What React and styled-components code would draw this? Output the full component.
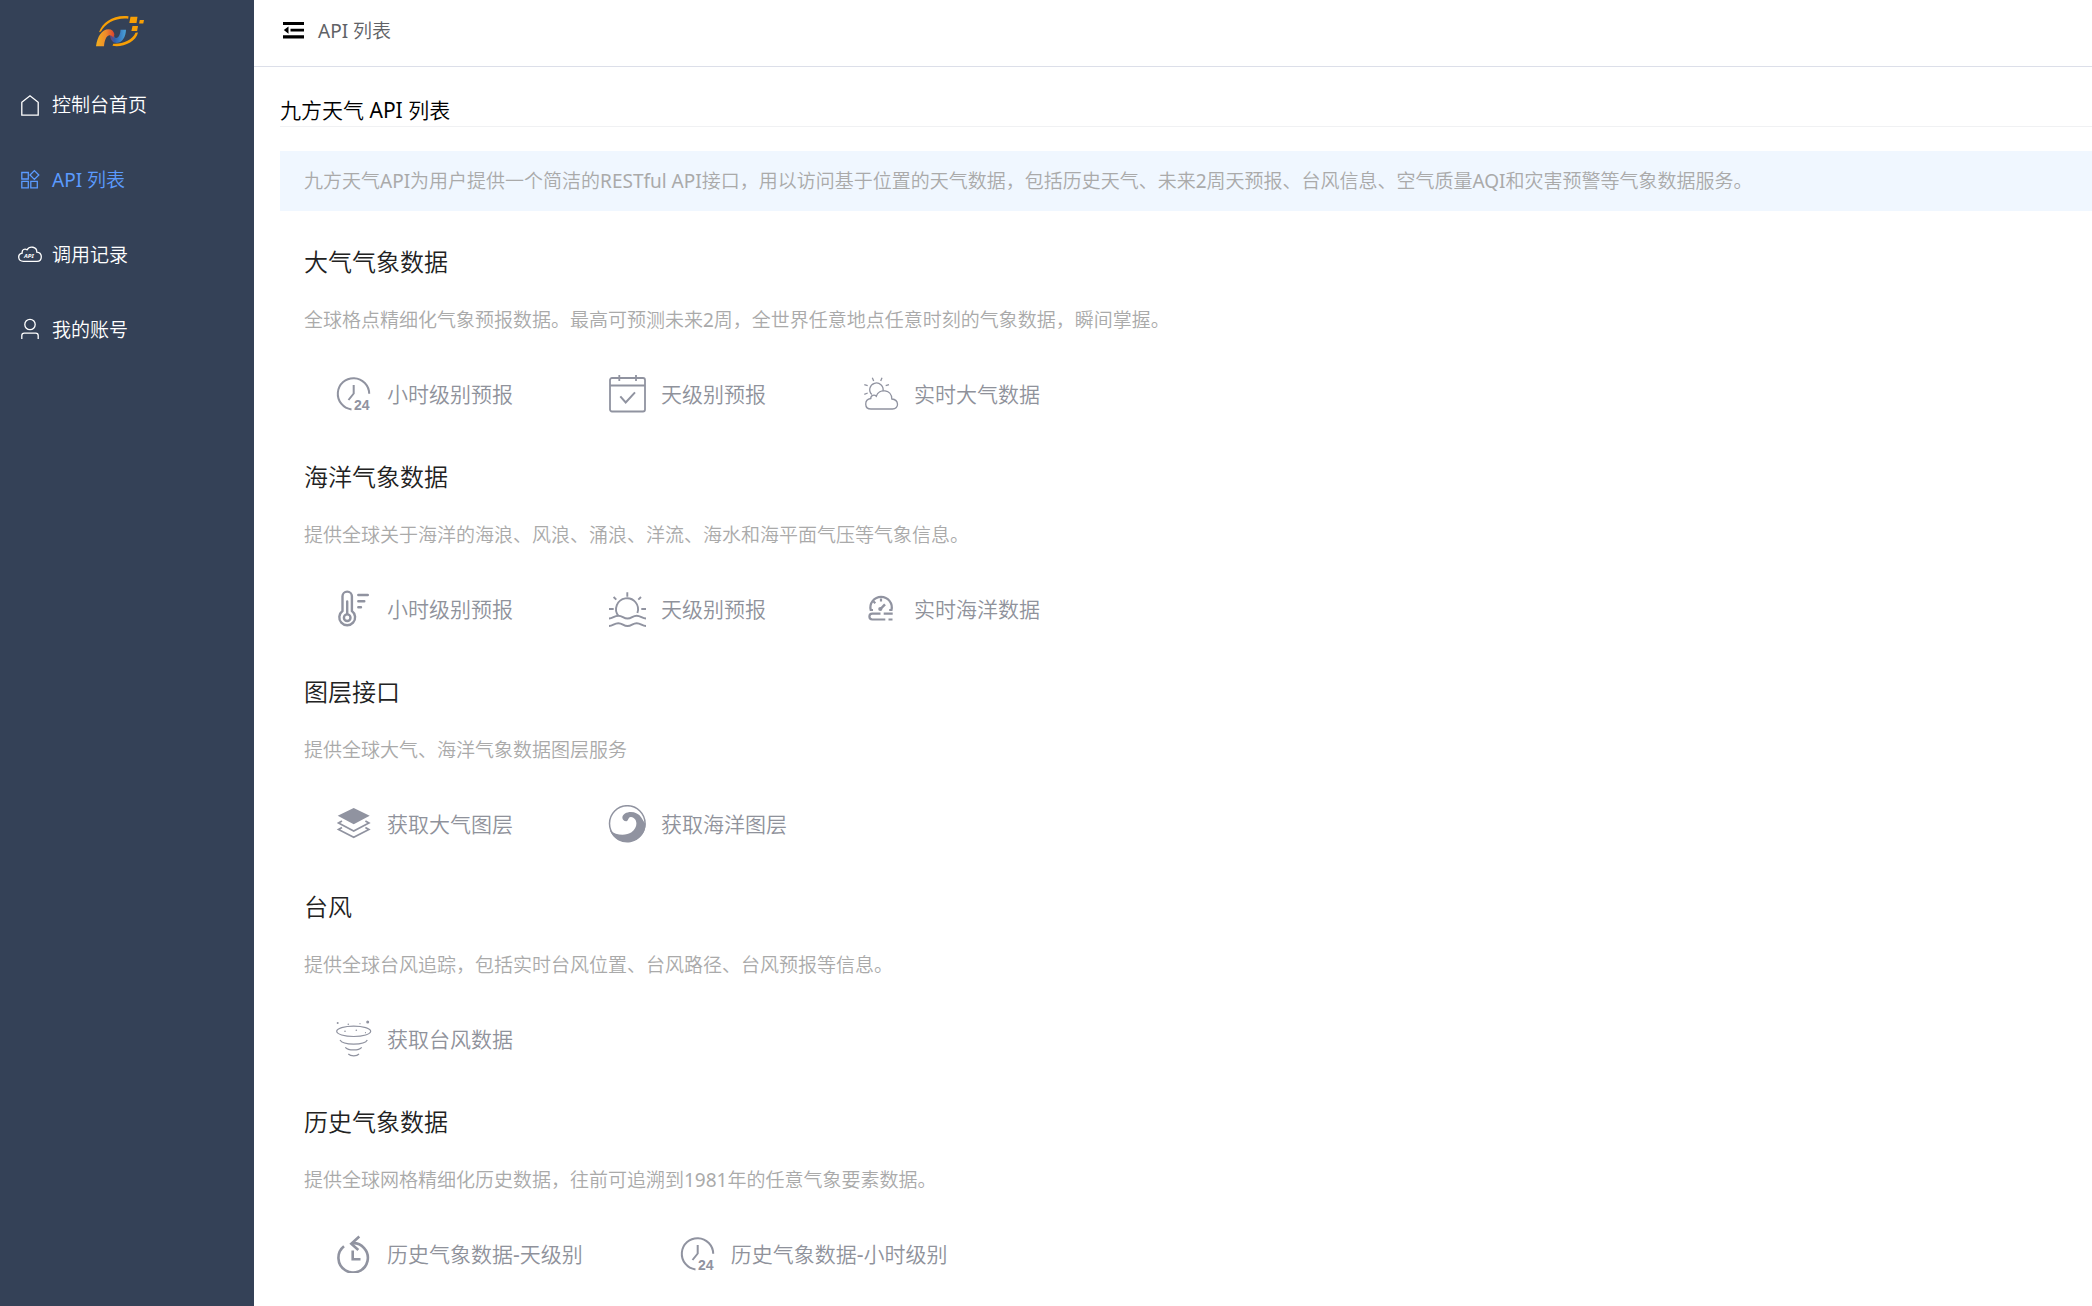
import React from "react";
import styled, { createGlobalStyle } from "styled-components";

const menu = [
  { id: "home", text: "控制台首页" },
  { id: "list", text: "API 列表", active: true },
  { id: "cloud", text: "调用记录" },
  { id: "user", text: "我的账号" },
];

const groups = [
  {
    title: "大气气象数据",
    desc: "全球格点精细化气象预报数据。最高可预测未来2周，全世界任意地点任意时刻的气象数据，瞬间掌握。",
    items: [
      { icon: "clock24", text: "小时级别预报" },
      { icon: "calendar", text: "天级别预报" },
      { icon: "cloudSun", text: "实时大气数据" },
    ],
  },
  {
    title: "海洋气象数据",
    desc: "提供全球关于海洋的海浪、风浪、涌浪、洋流、海水和海平面气压等气象信息。",
    items: [
      { icon: "thermometer", text: "小时级别预报" },
      { icon: "sunset", text: "天级别预报" },
      { icon: "gauge", text: "实时海洋数据" },
    ],
  },
  {
    title: "图层接口",
    desc: "提供全球大气、海洋气象数据图层服务",
    items: [
      { icon: "layers", text: "获取大气图层" },
      { icon: "wave", text: "获取海洋图层" },
    ],
  },
  {
    title: "台风",
    desc: "提供全球台风追踪，包括实时台风位置、台风路径、台风预报等信息。",
    items: [{ icon: "typhoon", text: "获取台风数据" }],
  },
  {
    title: "历史气象数据",
    desc: "提供全球网格精细化历史数据，往前可追溯到1981年的任意气象要素数据。",
    items: [
      { icon: "history", text: "历史气象数据-天级别" },
      { icon: "clock24", text: "历史气象数据-小时级别" },
    ],
  },
];

const menuIcons = {
  home: <path d="M3.8 10.2 12 3.8l8.2 6.4v13H3.8z" />,
  list: (
    <path d="M3.8 5.5h6.5V12H3.8zM3.8 14.3h6.5v6.5H3.8zM12.8 14.3h6.5v6.5h-6.5zM16.4 3.6l4.4 4.4-4.4 4.4L12 8z" />
  ),
  cloud: (
    <>
      <path d="M5.5 19.3c-6 0-6.3-7.3-1.3-8.1-.6-3.8 2.8-4.9 4.8-3.4 2.6-4.4 10-3.2 9.8 2.4 6.2.6 5.7 9.1.2 9.1z" />
      <text x="6" y="16" fontSize="6" fontWeight="700" fontStyle="italic">
        API
      </text>
    </>
  ),
  user: (
    <>
      <circle cx="12" cy="7.5" r="5.2" />
      <path d="M3.8 22v-3.5c0-1.5 1-2.3 2.5-2.3h11.4c1.5 0 2.5.8 2.5 2.3V22" />
    </>
  ),
};

const apiIcons = {
  clock24: (
    <g strokeWidth="2">
      <path d="M35.2 18.8A15.7 15.7 0 1 0 17.5 34.4" />
      <path d="M19.7 10v8.5L14.5 25" />
      <text x="20" y="34.5" fontSize="14" fontWeight="700">
        24
      </text>
    </g>
  ),
  calendar: (
    <g strokeWidth="1.8">
      <rect x="2" y="3" width="35" height="33.5" rx="2" />
      <path d="M2 10.5h35M11.3 0v6M28 0v6" />
      <path d="M12.3 21.3l5.4 6.2L27 17.3" strokeWidth="2" />
    </g>
  ),
  cloudSun: (
    <g strokeWidth="1.3">
      <path d="M10.8 19.5A6.7 6.7 0 1 1 22 16" />
      <path d="M11.3 2.7l1.4 3.3M21 2.7L19.7 6M3.3 9.7l3.4 1M3.3 19.3L6.7 18M24.7 10.7l3.3-1" />
      <path d="M10 34c-7 0-7-9.5-.2-10.5-.3-3.5 3.7-4.3 5.5-2.3 2.5-8 15.5-7.2 15.5 2.8 7.5.8 7.5 10 .7 10z" />
    </g>
  ),
  thermometer: (
    <g strokeWidth="2.4" strokeLinecap="round">
      <path d="M8.5 21V6.3a4.7 4.7 0 0 1 9.4 0V21a7.9 7.9 0 1 1-9.4 0z" />
      <path d="M13.2 11.5v12.3M24.3 5h9.5M24.3 11.3h6M24.3 17.3h2.7" />
      <circle cx="13.2" cy="27.7" r="3.3" />
    </g>
  ),
  sunset: (
    <g strokeWidth="1.9">
      <path d="M10.4 26a11 11 0 1 1 19-3" />
      <path d="M19.3 2.3v4.4M30.3 9.7L33 7M8.3 9.7L5.6 7M1 19h4.7M33.3 19H38" />
      <path d="M1 28.5c4 0 5-2.8 9.3-2.8s5 2.8 9.2 2.8 5-2.8 9.2-2.8 5.3 2.8 9.3 2.8" />
      <path d="M1 36c4 0 5-2.8 9.3-2.8s5 2.8 9.2 2.8 5-2.8 9.2-2.8S34 36 38 36" />
    </g>
  ),
  gauge: (
    <g strokeWidth="2.2">
      <path d="M12 20H9.7a10.7 10.7 0 1 1 20.8 0h-2.3" />
      <path d="M20 8.5v3M12.3 11.3l2 2" />
      <path d="M19.5 19l4.5-4.7" strokeWidth="2.5" />
      <circle cx="19.3" cy="19" r="1" />
      <path d="M19.5 23.7h-8.2a2.9 2.9 0 0 0 0 5.8h13M22.7 23.7h9M27.5 29.5h4" />
    </g>
  ),
  layers: (
    <g strokeWidth="1.7">
      <path className="solid" d="M19.7 3l16 7.8-16 8.5-16-8.5z" />
      <path d="M8 16l-3.5 2 15.2 8 15.2-8-3.5-2" />
      <path d="M8 22.5l-3.5 2 15.2 7.8 15.2-7.8-3.5-2" />
    </g>
  ),
  wave: (
    <g strokeWidth="1.5">
      <circle cx="19.3" cy="18.5" r="17.8" />
      <path
        className="solid"
        d="M2 25.5c6 5 16 5.5 21.5 1.8 7-5 6.2-14.5-.5-15.3-3-.2-2 3.5-4.7 4.3C14 16.3 12.7 11 17 8.5c5-3 13-1.5 16.3 4 1.8 3 3 5 4.2 6.5A18.3 18.3 0 0 1 2 25.5z"
      />
    </g>
  ),
  typhoon: (
    <g strokeWidth="1.2">
      <ellipse cx="19.7" cy="11.3" rx="17" ry="5.2" />
      <path d="M6 20c3 5.5 24.5 5.5 27.3 0M11.3 27.3c3 3.5 13.5 3.5 16.4 0M14.3 34c2.5 2.4 8.5 2.4 10.7 0" />
      <g className="solid">
        <circle cx="3.7" cy="3" r="1" />
        <circle cx="33.7" cy="2" r="1.5" />
        <circle cx="14.3" cy="4.3" r=".8" />
        <circle cx="26" cy="3.7" r=".6" />
        <circle cx="11" cy="11.3" r=".8" />
        <circle cx="22.3" cy="10.3" r=".8" />
        <circle cx="31.5" cy="12.7" r=".6" />
      </g>
    </g>
  ),
  history: (
    <g strokeWidth="2.6">
      <path d="M10 11.3a14.7 14.7 0 1 0 7.5-3.1" />
      <path d="M25.3 1.5l-8 7.2 7 6.3M18.7 15.5v8.8h7.8" />
    </g>
  ),
};

const App = () => {
  return (
    <>
      <GlobalStyle />
      <Layout>
        <Sidebar>
          <LogoLink href="#home" aria-label="九方天气">
            <Logo />
          </LogoLink>
          <nav>
            {menu.map(({ id, text, active }) => (
              <MenuLink
                key={id}
                href={`#${id}`}
                $active={active}
                aria-current={active ? "page" : undefined}
              >
                <MenuIcon viewBox="0 0 24 24" aria-hidden="true">
                  {menuIcons[id]}
                </MenuIcon>
                {text}
              </MenuLink>
            ))}
          </nav>
        </Sidebar>
        <Main>
          <TopBar>
            <FoldButton type="button" aria-label="收起菜单">
              <svg width="21" height="20" viewBox="0 0 21 20">
                <path d="M0 2h21v3H0zM7.5 8.8H21v2.6H7.5zM0 15.3h21v3.2H0zM.8 10.1l4.7-3.6v7.2z" />
              </svg>
            </FoldButton>
            <span>API 列表</span>
          </TopBar>
          <Content>
            <PageTitle>九方天气 API 列表</PageTitle>
            <Notice>
              九方天气API为用户提供一个简洁的RESTful
              API接口，用以访问基于位置的天气数据，包括历史天气、未来2周天预报、台风信息、空气质量AQI和灾害预警等气象数据服务。
            </Notice>
            {groups.map((group) => (
              <Group key={group.title}>
                <h2>{group.title}</h2>
                <p>{group.desc}</p>
                <ApiList>
                  {group.items.map(({ icon, text }) => (
                    <li key={text}>
                      <ApiLink href="#doc">
                        <ApiIcon viewBox="0 0 38 38" aria-hidden="true">
                          {apiIcons[icon]}
                        </ApiIcon>
                        {text}
                      </ApiLink>
                    </li>
                  ))}
                </ApiList>
              </Group>
            ))}
          </Content>
        </Main>
      </Layout>
    </>
  );
};

const Logo = () => (
  <svg width="48" height="32" viewBox="0 0 48 32" aria-hidden="true">
    <defs>
      <linearGradient id="leg" x1="0" y1="0" x2="1" y2="0">
        <stop offset="0" stopColor="#f2b01e" />
        <stop offset=".55" stopColor="#ee8a2b" />
        <stop offset="1" stopColor="#d9402f" />
      </linearGradient>
      <linearGradient id="hook" x1="0" y1="0" x2="1" y2="0">
        <stop offset="0" stopColor="#7a3f6a" />
        <stop offset=".3" stopColor="#2c5fb0" />
        <stop offset="1" stopColor="#4aa3d8" />
      </linearGradient>
    </defs>
    <g fill="#f79f05">
      <path d="M3 17.3C6.5 7 18-.5 32.5 1.3l-.3 2.4C20 2.500 9.500 8 5 16.500z" />
      <path d="M16.5 30.8c10 1.8 23.5-3.5 25.5-13.3l-2.5.3C36.5 25 27 29.3 17.3 28.8z" />
      <path d="M34.5 1.8h7l-1 6.3h-7.2zM43.8 5h4.2l-.7 3.4h-4.2zM36.5 11h5.5l-.9 5h-5.7z" />
    </g>
    <path
      fill="url(#hook)"
      d="M14 20c.5 5 3 8.3 7 8 5.5-.5 8.7-6 9-13.2h-5.5c-.2 4.5-1.8 8.2-4.3 8.3-1.5 0-2-1.8-2.2-3.5z"
    />
    <path
      fill="url(#leg)"
      d="M0 31.2C1.5 21 6 14.3 12.5 14.3c3.3 0 5.3 2 5.9 4.9l-1 3.5c-1-1.6-2.2-2.9-4.1-2.5-3.3.7-4.7 5.3-5.3 11z"
    />
  </svg>
);

const GlobalStyle = createGlobalStyle`
  * {
    box-sizing: border-box;
    margin: 0;
    padding: 0;
  }
  body {
    background: #fff;
    font-family: "Noto Sans", "Noto Sans CJK SC DemiLight", "Noto Sans CJK SC", sans-serif;
    font-size: 19px;
  }
  a {
    text-decoration: none;
  }
`;

const Layout = styled.div`
  display: flex;
  min-height: 100vh;
`;

const Sidebar = styled.aside`
  flex: 0 0 254px;
  background: #344157;
`;

const LogoLink = styled.a`
  display: flex;
  height: 66px;
  padding: 15px 0 0 96px;
`;

const MenuLink = styled.a`
  display: flex;
  align-items: center;
  gap: 10px;
  height: 75px;
  padding-left: 18px;
  color: ${({ $active }) => ($active ? "#5b9bff" : "#fff")};
`;

const MenuIcon = styled.svg`
  width: 24px;
  height: 24px;
  overflow: visible;
  fill: none;
  stroke: currentColor;
  stroke-width: 1.3;
  text {
    fill: currentColor;
    stroke: none;
  }
`;

const Main = styled.main`
  flex: 1;
  min-width: 0;
`;

const TopBar = styled.header`
  display: flex;
  align-items: center;
  gap: 14px;
  height: 67px;
  padding: 0 29px 7px;
  border-bottom: 1px solid #dcdfe9;
  color: #606266;
`;

const FoldButton = styled.button`
  display: flex;
  border: none;
  background: none;
  cursor: pointer;
`;

const Content = styled.div`
  padding: 28px 0 0 26px;
`;

const PageTitle = styled.h1`
  margin-bottom: 24px;
  border-bottom: 1px solid #f0f1f3;
  color: #000;
  font-size: 21px;
  font-weight: 400;
  line-height: 31px;
`;

const Notice = styled.p`
  padding: 0 24px;
  background: #f0f7ff;
  color: #aaa;
  line-height: 60px;
`;

const Group = styled.section`
  padding: 0 24px;
  margin-top: 48px;
  ${Notice} + & {
    margin-top: 35px;
  }
  h2 {
    color: #222;
    font-size: 24px;
    font-weight: 400;
    line-height: 32px;
  }
  p {
    margin: 28px 0 41px;
    color: #aaa;
    line-height: 28px;
  }
`;

const ApiList = styled.ul`
  display: flex;
  flex-wrap: wrap;
  gap: 95px;
  padding-left: 30px;
  list-style: none;
`;

const ApiLink = styled.a`
  display: flex;
  align-items: center;
  gap: 15px;
  color: #8f929b;
  font-size: 21px;
  line-height: 38px;
`;

const ApiIcon = styled.svg`
  width: 38px;
  height: 38px;
  fill: none;
  stroke: #9093a0;
  text,
  .solid {
    fill: #9093a0;
    stroke: none;
  }
  text {
    font-family: "Liberation Sans", sans-serif;
  }
`;

export default App;
